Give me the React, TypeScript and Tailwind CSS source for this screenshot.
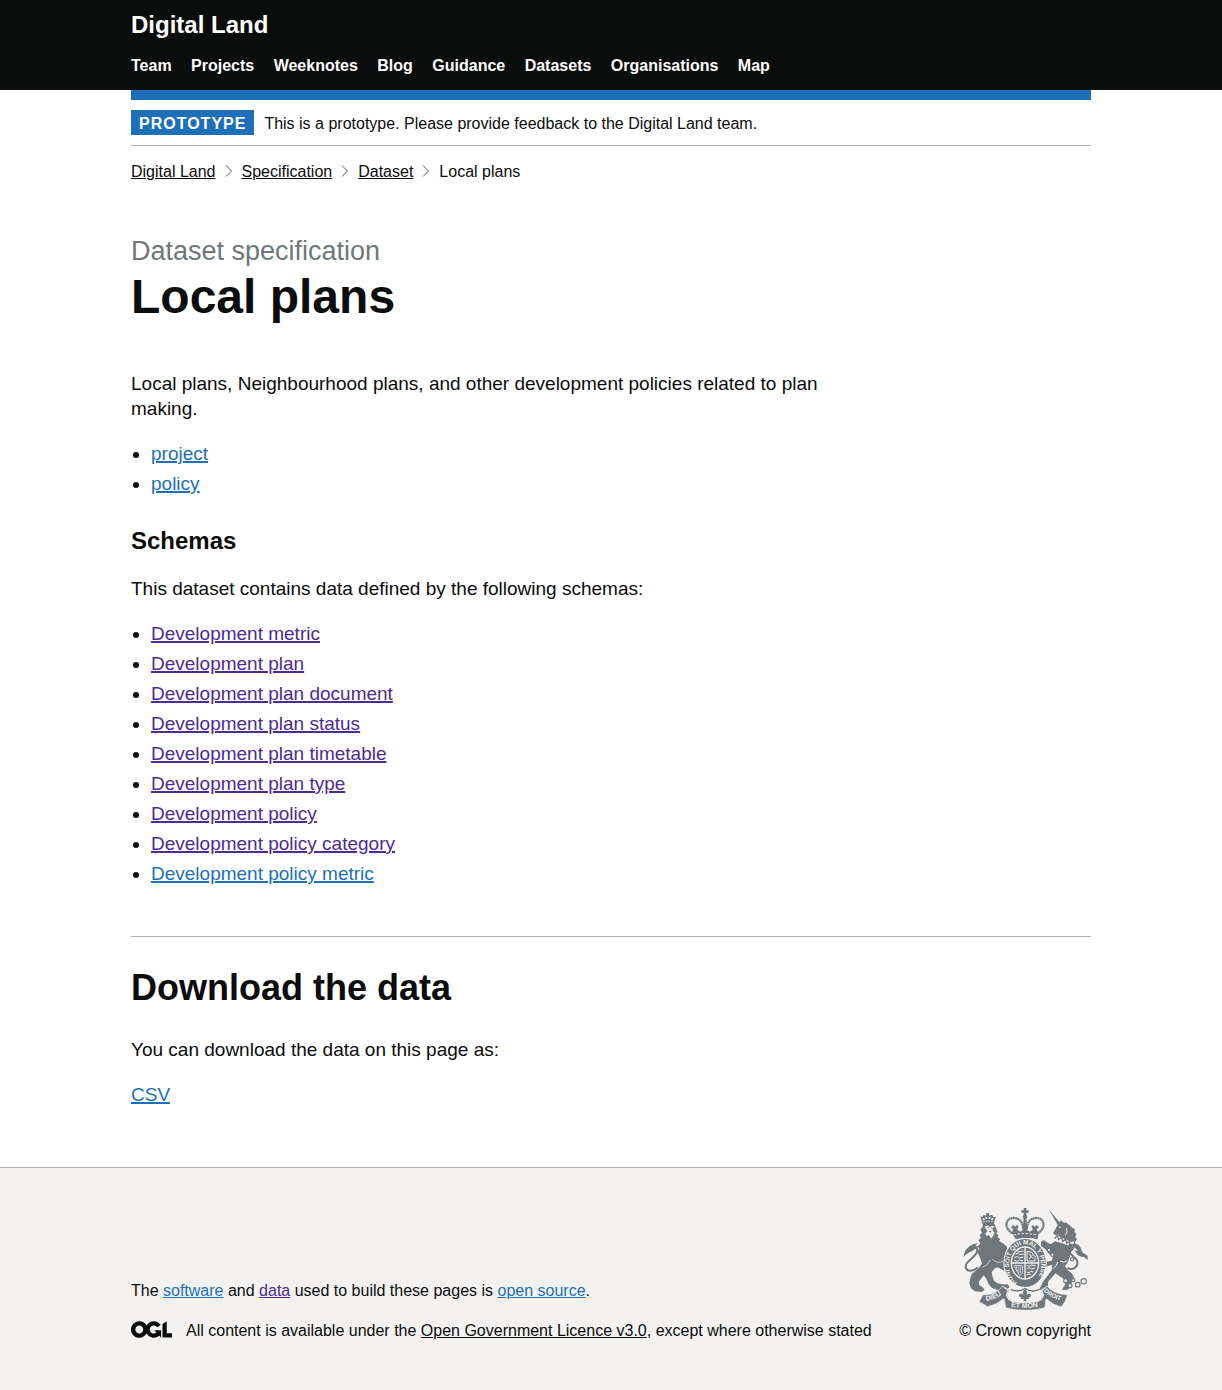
import React from "react";

const navItems = ["Team", "Projects", "Weeknotes", "Blog", "Guidance", "Datasets", "Organisations", "Map"];
const crumbs = ["Digital Land", "Specification", "Dataset"];
const schemas = [
  { name: "Development metric", visited: true },
  { name: "Development plan", visited: true },
  { name: "Development plan document", visited: true },
  { name: "Development plan status", visited: true },
  { name: "Development plan timetable", visited: true },
  { name: "Development plan type", visited: true },
  { name: "Development policy", visited: true },
  { name: "Development policy category", visited: true },
  { name: "Development policy metric", visited: false },
];

function TextLink({ children, visited = false }: { children: React.ReactNode; visited?: boolean }) {
  return (
    <a href="#" className={visited ? "text-[#4c2c92] underline" : "text-[#1d70b8] underline"}>
      {children}
    </a>
  );
}

function LinkList({ items }: { items: { name: string; visited: boolean }[] }) {
  return (
    <ul className="list-disc space-y-[5px] pl-5">
      {items.map((item) => (
        <li key={item.name}>
          <TextLink visited={item.visited}>{item.name}</TextLink>
        </li>
      ))}
    </ul>
  );
}

function OglLogo() {
  return (
    <svg className="h-[17px] w-[41px] shrink-0" viewBox="0 0 483.2 195.7" fill="currentColor" role="img" aria-label="Open Government Licence">
      <path d="M421.5 142.8V.1l-50.7 32.3v161.1h112.4v-50.7zm-122.3-9.6A47.12 47.12 0 0 1 221 97.8c0-26 21.1-47.1 47.1-47.1 16.7 0 31.4 8.7 39.7 21.8l42.7-27.2A97.63 97.63 0 0 0 268.1 0c-36.5 0-68.3 20.1-85.1 49.7A98 98 0 0 0 97.8 0C43.9 0 0 43.9 0 97.8s43.9 97.8 97.8 97.8c36.5 0 68.3-20.1 85.1-49.7a97.76 97.76 0 0 0 149.6 25.4l19.4 22.2h3v-87.8h-80l24.3 27.5zM97.8 145c-26 0-47.1-21.1-47.1-47.1s21.1-47.1 47.1-47.1 47.1 21.1 47.1 47.1S123.8 145 97.8 145" />
    </svg>
  );
}

function RoyalArms() {
  const ink = "#6f777b";
  const paper = "#f3f2f1";
  return (
    <svg className="h-[102px] w-[125px]" viewBox="14 12 375 306" fill={ink} role="img" aria-label="Royal coat of arms">
      {/* crown above the garter */}
      <path d="M196 12h8v7h7v7h-7v8h-8v-8h-7v-7h7z" />
      <circle cx="200" cy="39" r="7" />
      <path d="M196 45h8l3 24h-14z" />
      <g fill="none" stroke={ink} strokeWidth="7" strokeDasharray="6 1">
        <path d="M162 88C134 70 142 40 168 42c15 1 23 11 27 28" />
        <path d="M238 88c28-18 20-48-6-46-15 1-23 11-27 28" />
      </g>
      <path d="M160 86l5-10-7-6 6-7 7 5 5-6 5 6-5 8 9 7 9-5-4-7 10-9 10 9-4 7 9 5 9-7-5-8 5-6 5 6 7-5 6 7-7 6 5 10-2 20q-33-8-66 0z" />
      <path d="M166 93q34-9 68 0" fill="none" stroke={paper} strokeWidth="3" strokeDasharray="7 5" />

      {/* lion */}
      <path d="M72 59L66 37l6 2 4-7 6 3 3-8h6l3 8 7-3 4 7 8-1-7 21z" />
      <g fill={paper}>
        <circle cx="76" cy="46" r="3" />
        <circle cx="84" cy="42" r="3" />
        <circle cx="94" cy="42" r="3" />
        <circle cx="102" cy="45" r="3" />
      </g>
      <path d="M74 54q16-5 31-1" fill="none" stroke={paper} strokeWidth="3" strokeDasharray="5 3" />
      <path d="M74 58C84 54 104 52 109 61L113 72 118 84 113 88 121 94 117 99 126 106 122 111 134 118 146 128 148 142 146 156 146 176 150 196 140 202 118 190 108 194 100 204 102 216 107 230 116 237 130 241 148 241 154 250 142 258 118 258 100 251 90 239 84 224 76 214 70 222 61 234 63 244 73 250 79 258 70 264 50 262 38 253 33 238 36 222 40 210 52 200 64 189 71 178 66 164 60 150 56 141 64 135 57 127 66 119 60 109 68 102 64 93 71 86 66 76 72 70z" />
      <path d="M80 66l10-1 4 4 8-4 7 3-7 5 2 9 5 5-4 7-6 10-7-10-8 1-3-6 6-8-5-7z" fill={paper} />
      <path d="M85 69h6l1 5zM97 71l6-1-5 5zM91 80h9l-4 7z" />
      <path d="M72 190q18-6 24-22M102 166q16 14 32 6" fill="none" stroke={paper} strokeWidth="2" />
      <path d="M58 190c-14 14-37 14-36-4 2-18 34-27 35-47 0-10-10-14-18-8" fill="none" stroke={ink} strokeWidth="6" />
      <path d="M15 160c4-24 17-39 44-42l-9 9 10 1-14 10c-12 8-21 9-31 22z" />

      {/* unicorn */}
      <path d="M271 16l35 42-8 4z" />
      <path d="M302 55L309 49 314 55 324 56 334 64 342 72 350 76 348 84 355 90 350 98 356 106 350 114 352 124 346 136 338 144 334 160 328 176 320 186 328 198 340 208 347 220 340 236 337 250 326 258 310 257 320 243 322 228 306 218 292 208 284 217 270 232 268 248 260 258 242 257 248 246 256 230 270 212 282 196 280 182 264 188 254 180 264 173 280 170 284 158 272 150 260 134 248 126 248 114 257 108 268 117 278 120 290 112 294 100 303 91 290 94 284 87 292 74z" />
      <path d="M292 92l46 22 9-3-2 16-11-1-18-7-30-9 3-9z" fill={paper} />
      <path d="M289 104l8-10 4 13 9-7 3 12 9-6 3 12 9-5 1 13" fill="none" stroke={ink} strokeWidth="4" />
      <path d="M302 69l6 1M324 72q6 12-3 22" fill="none" stroke={paper} strokeWidth="3" />
      <path d="M327 192c16 8 33-3 30-19-4-15-27-22-27-39 0-12 12-15 20-6" fill="none" stroke={ink} strokeWidth="6" />
      <path d="M341 121c22-6 27 10 31 24l16 10v13l-11-9c-16 0-24-8-27-20l9 3z" />
      <path d="M286 192q10-6 12-18M306 172q11 6 22-2" fill="none" stroke={paper} strokeWidth="3" />
      <g fill={paper} stroke={ink} strokeWidth="3.5">
        <circle cx="322" cy="230" r="6" />
        <circle cx="335" cy="245" r="6" />
        <circle cx="345" cy="229" r="5" />
        <circle cx="358" cy="242" r="7" />
        <circle cx="376" cy="232" r="8" />
        <circle cx="282" cy="152" r="5" />
        <circle cx="341" cy="166" r="5" />
        <circle cx="272" cy="138" r="5" />
      </g>

      {/* garter */}
      <ellipse cx="200" cy="177" rx="65" ry="75" fill={paper} />
      <ellipse cx="200" cy="177" rx="62" ry="72" />
      <ellipse cx="200" cy="177" rx="43" ry="50" fill={paper} />
      <defs>
        <path id="garter" d="M176 236A47 56 0 0 1 153 177A47 56 0 0 1 247 177A47 56 0 0 1 224 236" />
        <path id="ribbonLeft" d="M84 291q34-5 60-32" />
        <path id="ribbonMid" d="M158 308q42 8 84 0" />
        <path id="ribbonRight" d="M256 261q22 25 60 30" />
      </defs>
      <text fill={paper} fontFamily="'Liberation Sans', Arial, sans-serif" fontWeight="bold" fontSize="19" aria-hidden="true">
        <textPath href="#garter">HONI SOIT QUI MAL Y PENSE</textPath>
      </text>

      {/* quartered shield */}
      <ellipse cx="200" cy="177" rx="39" ry="46" />
      <path d="M200 131v92M161 177h78" stroke={paper} strokeWidth="4" />
      <path d="M172 150l8-3 5 5 11-2M168 160l9-2 5 4 13-3M176 140l8 3 11-2M168 169l9 3 7-4 10 3M205 184l8 3 5-4 14 2M205 194l9-3 5 4 11-3M205 204l8 2 5-4 8 2M205 213l7-3 6 3" fill="none" stroke={paper} strokeWidth="3" />
      <path d="M206 142l14 3 10 13v13h-24zM212 149l12 15M224 151l-12 14" fill="none" stroke={paper} strokeWidth="3" />
      <path d="M168 184l25 1v22l-8 8-10-14zM174 186l3 17M181 187l1 22M187 187v22" fill="none" stroke={paper} strokeWidth="2" />

      {/* motto ribbon */}
      <path d="M74 272C100 274 118 264 134 246L152 258 146 274Q150 284 158 292 200 301 242 292 250 284 254 274L248 258 266 246C280 262 300 272 328 272L321 291 309 309Q284 303 266 286L262 287 260 311Q200 327 142 311L138 286 134 285Q114 303 88 308L62 293z" stroke={paper} strokeWidth="2" />
      <path d="M136 250l13 9-5 15 9 16M264 250l-13 9 5 15-9 16" fill="none" stroke={paper} strokeWidth="3" />
      <g fill={paper} fontFamily="'Liberation Sans', Arial, sans-serif" fontWeight="bold" fontSize="21" aria-hidden="true">
        <text><textPath href="#ribbonLeft">DIEU</textPath></text>
        <text><textPath href="#ribbonMid">ET MON</textPath></text>
        <text fontSize="19"><textPath href="#ribbonRight">DROIT</textPath></text>
      </g>
      <path d="M160 284Q160 268 166 260L200 254 234 260Q240 268 240 284 200 294 160 284z" fill={paper} />
      <path d="M200 255q11 10 4 19 7-9 13-3 4 7-6 10 2 3 1 5l-8-2v8h-8v-8l-8 2q-1-2 1-5-10-3-6-10 6-6 13 3-7-9 4-19z" />
      <path d="M157 256q22 11 43-2 21 13 43 2" fill="none" stroke={ink} strokeWidth="4" />
    </svg>
  );
}

export default function App() {
  return (
    <div className="bg-[#f3f2f1] font-['Liberation_Sans',Arial,sans-serif] text-base leading-5 text-[#0b0c0c]">
      <header className="bg-[#0b0c0c] px-[30px] text-white">
        <div className="mx-auto max-w-[960px] pt-2.5 pb-3.5">
          <a href="#" className="block text-2xl leading-[30px] font-bold">
            Digital Land
          </a>
          <nav aria-label="Main" className="mt-4">
            <ul className="font-bold">
              {navItems.map((item) => (
                <React.Fragment key={item}>
                  <li className="mr-[15px] inline">
                    <a href="#">{item}</a>
                  </li>{" "}
                </React.Fragment>
              ))}
            </ul>
          </nav>
        </div>
      </header>

      <div className="bg-white px-[30px]">
        <div className="mx-auto max-w-[960px]">
          <div className="flex items-center gap-2.5 border-t-10 border-b border-t-[#1d70b8] border-b-[#b1b4b6] py-2.5">
            <strong className="bg-[#1d70b8] px-2 pt-1 pb-px tracking-[1px] text-white">PROTOTYPE</strong>
            <span className="pt-1 pb-px">This is a prototype. Please provide feedback to the Digital Land team.</span>
          </div>

          <nav aria-label="Breadcrumb" className="pt-4">
            <ol className="flex flex-wrap items-start">
              {crumbs.map((crumb) => (
                <li key={crumb} className="flex items-start">
                  <a href="#" className="underline">
                    {crumb}
                  </a>
                  <svg className="mx-2 mt-[3px] h-3 w-[10px]" viewBox="0 0 10 12" fill="none" stroke="#505a5f" aria-hidden="true">
                    <path d="M2 .5L7.500 6 2 11.500" />
                  </svg>
                </li>
              ))}
              <li aria-current="page">Local plans</li>
            </ol>
          </nav>

          <main className="pt-[54px] pb-[60px] text-[19px] leading-[25px] [&_a]:decoration-2 [&_a]:underline-offset-1">
            <span className="block text-[27px] leading-[30px] text-[#6f777b]">Dataset specification</span>
            <h1 className="pt-px text-5xl leading-[60px] font-bold">Local plans</h1>

            <div className="mt-11 max-w-[700px]">
              <p className="mb-5">
                Local plans, Neighbourhood plans, and other development policies related to plan making.
              </p>
              <LinkList items={[{ name: "project", visited: false }, { name: "policy", visited: false }]} />
              <h2 className="mt-[30px] mb-5 text-2xl leading-[30px] font-bold">Schemas</h2>
              <p className="mb-5">This dataset contains data defined by the following schemas:</p>
              <LinkList items={schemas} />
            </div>

            <section className="mt-[50px] border-t border-[#b1b4b6] pt-[31px]">
              <h2 className="mb-[29px] text-4xl leading-10 font-bold">Download the data</h2>
              <p className="mb-5">You can download the data on this page as:</p>
              <TextLink>CSV</TextLink>
            </section>
          </main>
        </div>
      </div>

      <footer className="border-t border-[#b1b4b6] px-[30px] pt-10 pb-[49px]">
        <div className="mx-auto flex max-w-[960px] flex-wrap items-end justify-between gap-5">
          <div>
            <p className="mb-5">
              The <TextLink>software</TextLink> and <TextLink visited>data</TextLink> used to build these pages is{" "}
              <TextLink>open source</TextLink>.
            </p>
            <div className="flex items-start gap-3.5">
              <OglLogo />
              <span>
                All content is available under the{" "}
                <a href="#" className="underline">
                  Open Government Licence v3.0
                </a>
                , except where otherwise stated
              </span>
            </div>
          </div>
          <a href="#" className="flex flex-col items-center gap-[11px]">
            <RoyalArms />
            <span>© Crown copyright</span>
          </a>
        </div>
      </footer>
    </div>
  );
}
